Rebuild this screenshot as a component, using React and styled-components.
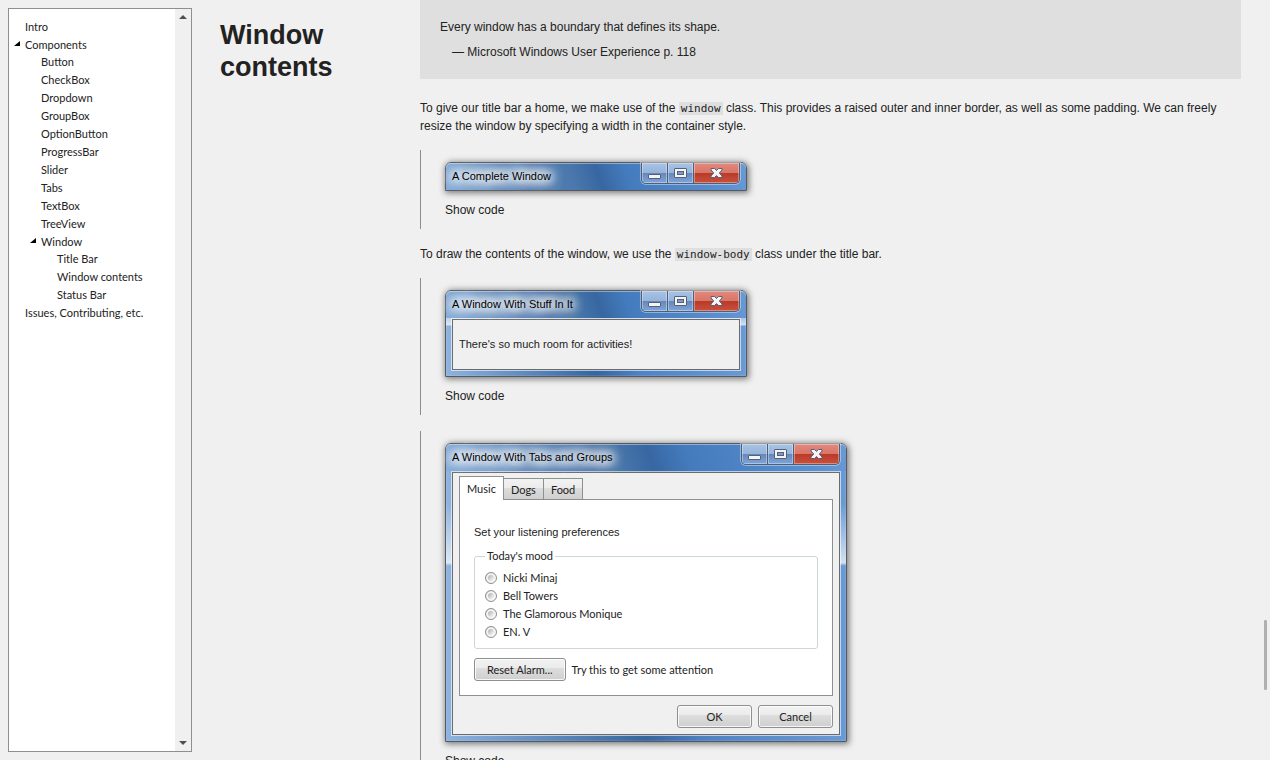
import React from 'react'
import styled, { createGlobalStyle, css } from 'styled-components'

const GlobalStyle = createGlobalStyle`
  * {
    box-sizing: border-box;
  }

  body {
    margin: 0;
    background: #f0f0f0;
    color: #222;
    font-family: 'Liberation Sans', Arial, sans-serif;
    font-size: 12px;
    line-height: 18px;
  }
`

const uiFont = css`
  font-family: Lato, 'Segoe UI', sans-serif;
  font-size: 11px;
`

const tree = [
  { label: 'Intro' },
  {
    label: 'Components',
    children: [
      { label: 'Button' },
      { label: 'CheckBox' },
      { label: 'Dropdown' },
      { label: 'GroupBox' },
      { label: 'OptionButton' },
      { label: 'ProgressBar' },
      { label: 'Slider' },
      { label: 'Tabs' },
      { label: 'TextBox' },
      { label: 'TreeView' },
      {
        label: 'Window',
        children: [
          { label: 'Title Bar' },
          { label: 'Window contents' },
          { label: 'Status Bar' },
        ],
      },
    ],
  },
  { label: 'Issues, Contributing, etc.' },
]

const moods = ['Nicki Minaj', 'Bell Towers', 'The Glamorous Monique', 'EN. V']

const TreeList = ({ items, nested }) => (
  <List $nested={nested}>
    {items.map((item) => (
      <li key={item.label}>
        <TreeLink href="#">
          {item.children && (
            <Marker viewBox="0 0 7 6" aria-hidden="true">
              <path d="M6 0v5H0z" />
            </Marker>
          )}
          {item.label}
        </TreeLink>
        {item.children && <TreeList items={item.children} nested />}
      </li>
    ))}
  </List>
)

const Win = ({ title, wide, children }) => (
  <Window $wide={wide}>
    <TitleBar>
      <TitleText>{title}</TitleText>
      <Controls>
        <ControlButton aria-label="Minimize" $low>
          <svg width="13" height="5" viewBox="0 0 13 5">
            <rect x="0.5" y="0.5" width="12" height="4" rx="0.5" fill="#f4f4f4" stroke="#55607c" />
          </svg>
        </ControlButton>
        <ControlButton aria-label="Maximize">
          <svg width="13" height="10" viewBox="0 0 13 10">
            <rect x="0.5" y="0.5" width="12" height="9" rx="0.5" fill="#f4f4f4" stroke="#55607c" />
            <rect x="3.5" y="3.5" width="6" height="3" fill="#7f9cc9" stroke="#55607c" />
          </svg>
        </ControlButton>
        <ControlButton aria-label="Close" $close>
          <svg width="13" height="10" viewBox="0 0 13 10">
            <path
              d="M1 .5h3.500l2 2 2-2H12v1.500L9.300 5 12 8v1.500H8.500l-2-2-2 2H1V8l2.700-3L1 2z"
              fill="#f4f4f4"
              stroke="#55607c"
              strokeLinejoin="round"
            />
          </svg>
        </ControlButton>
      </Controls>
    </TitleBar>
    {children}
  </Window>
)

const App = () => {
  return (
    <Page>
      <GlobalStyle />
      <Sidebar>
        <TreeList items={tree} />
        <TreeScroll aria-hidden="true">
          <svg width="8" height="6" viewBox="0 0 8 6">
            <path d="M4 1l4 4H0z" fill="#505050" />
          </svg>
          <svg width="8" height="6" viewBox="0 0 8 6">
            <path d="M4 5l4-4H0z" fill="#505050" />
          </svg>
        </TreeScroll>
      </Sidebar>
      <Main>
        <Heading>Window contents</Heading>
        <Content>
          <Quote>
            Every window has a boundary that defines its shape.
            <footer>— Microsoft Windows User Experience p. 118</footer>
          </Quote>
          <Text>
            To give our title bar a home, we make use of the <Code>window</Code> class. This
            provides a raised outer and inner border, as well as some padding. We can freely resize
            the window by specifying a width in the container style.
          </Text>
          <Example>
            <Win title="A Complete Window" />
            <details>
              <Summary>Show code</Summary>
            </details>
          </Example>
          <Text>
            To draw the contents of the window, we use the <Code>window-body</Code> class under the
            title bar.
          </Text>
          <Example>
            <Win title="A Window With Stuff In It">
              <WindowBody>
                <Note>There's so much room for activities!</Note>
              </WindowBody>
            </Win>
            <details>
              <Summary>Show code</Summary>
            </details>
          </Example>
          <Example>
            <Win title="A Window With Tabs and Groups" wide>
              <WindowBody>
                <TabRow role="tablist">
                  <Tab role="tab" aria-selected="true">Music</Tab>
                  <Tab role="tab" aria-selected="false">Dogs</Tab>
                  <Tab role="tab" aria-selected="false">Food</Tab>
                </TabRow>
                <TabPanel role="tabpanel">
                  <PanelText>Set your listening preferences</PanelText>
                  <Fieldset>
                    <legend>Today's mood</legend>
                    {moods.map((mood, i) => (
                      <Option key={mood}>
                        <input type="radio" name="mood" id={`mood-${i}`} />
                        <label htmlFor={`mood-${i}`}>{mood}</label>
                      </Option>
                    ))}
                  </Fieldset>
                  <AlarmRow>
                    <Button id="alarm">Reset Alarm...</Button>
                    <label htmlFor="alarm">Try this to get some attention</label>
                  </AlarmRow>
                </TabPanel>
                <Actions>
                  <Button>OK</Button>
                  <Button>Cancel</Button>
                </Actions>
              </WindowBody>
            </Win>
            <details>
              <Summary>Show code</Summary>
            </details>
          </Example>
        </Content>
      </Main>
      <ScrollThumb aria-hidden="true" />
    </Page>
  )
}

const Page = styled.div`
  display: flex;
  height: 100vh;
  overflow: hidden;
`

const Sidebar = styled.nav`
  display: flex;
  flex: 0 0 184px;
  margin: 8px 28px 8px 8px;
  border: 1px solid #8e8f8f;
  background: #fff;
`

const List = styled.ul`
  flex: 1;
  margin: ${({ $nested }) => ($nested ? '-1px 0 0' : '0')};
  padding: ${({ $nested }) => ($nested ? '0 0 0 16px' : '9px 0 0 16px')};
  list-style: none;
`

const TreeLink = styled.a`
  ${uiFont}
  position: relative;
  display: block;
  color: #222;
  line-height: 18px;
  text-decoration: none;
  white-space: nowrap;
`

const Marker = styled.svg`
  position: absolute;
  top: 5px;
  left: -11px;
  width: 7px;
  height: 6px;
`

const TreeScroll = styled.div`
  display: flex;
  flex-direction: column;
  align-items: center;
  justify-content: space-between;
  width: 16px;
  padding: 5px 0;
  background: #f0f0f0;
`

const Main = styled.main`
  display: flex;
  flex: 1;
  min-width: 0;
  align-items: flex-start;
  padding-right: 29px;
`

const Heading = styled.h2`
  flex: 0 0 200px;
  margin: 0;
  padding: 19px 60px 0 0;
  font-size: 27px;
  line-height: 32px;
`

const Content = styled.div`
  flex: 1;
  min-width: 0;
`

const Quote = styled.blockquote`
  margin: 0 0 20px;
  padding: 18px 20px;
  background: #dfdfdf;

  footer {
    margin-top: 7px;
    padding-left: 12px;
  }
`

const Text = styled.p`
  margin: 0 0 15px;
`

const Code = styled.code`
  padding: 0 2px;
  background: #dfdfdf;
  font-family: 'DejaVu Sans Mono', monospace;
  font-size: 11px;
  line-height: 14px;
`

const Example = styled.div`
  margin-bottom: 16px;
  padding: 12px 0 10px 24px;
  border-left: 1px solid #8c8c8c;
`

const Summary = styled.summary`
  margin-top: 10px;
  list-style: none;
`

const Window = styled.div`
  max-width: ${({ $wide }) => ($wide ? '402px' : '302px')};
  border: 1px solid #555a62;
  border-radius: 6px 6px 0 0;
  background:
    linear-gradient(transparent 20%, rgba(255, 255, 255, 0.7) 40%, transparent 41%),
    linear-gradient(90deg, #8db3df, #36659f 50%, #4f83c4 65%, #6a9ad4);
  box-shadow:
    1px 1px 6px 1px rgba(0, 0, 0, 0.5),
    inset 0 0 0 1px rgba(255, 255, 255, 0.1);
`

const TitleBar = styled.div`
  display: flex;
  align-items: flex-start;
  justify-content: space-between;
  height: 27px;
  padding: 0 6px;
  border-radius: 5px 5px 0 0;
  background: linear-gradient(70deg, #86aedb, #5b88bc 25%, #4b78ac 42%, #3767a2 51%, #447bbd 60%, #5a8fd0 90%, #6a9ad4);
  box-shadow: inset 0 1px 0 rgba(255, 255, 255, 0.4);
`

const TitleText = styled.div`
  padding-top: 4px;
  color: #000;
  font-size: 11px;
  text-shadow:
    0 0 10px #fff,
    0 0 10px #fff,
    0 0 12px #fff,
    0 0 12px #fff,
    0 0 16px #fff,
    0 0 16px #fff,
    0 0 16px #fff,
    0 0 16px #fff;
`

const Controls = styled.div`
  display: flex;
  height: 21px;
  border: 1px solid #4f5f78;
  border-top: 0;
  border-radius: 0 0 5px 5px;
  overflow: hidden;
  box-shadow: 0 0 0 1px rgba(255, 255, 255, 0.4);
`

const ControlButton = styled.button`
  display: flex;
  align-items: ${({ $low }) => ($low ? 'flex-end' : 'center')};
  justify-content: center;
  width: ${({ $close }) => ($close ? '45px' : '26px')};
  padding: ${({ $low }) => ($low ? '0 0 4px' : '0')};
  border: 0;
  border-right: ${({ $close }) => ($close ? '0' : '1px solid #4f5f78')};
  background: ${({ $close }) =>
    $close
      ? 'linear-gradient(#e08a7d, #da7567 50%, #b83a2a 50%, #c9503c)'
      : 'linear-gradient(#a9c3e3, #94b4dc 50%, #6487ba 50%, #7fa5d8)'};
  box-shadow: inset 0 0 0 1px rgba(255, 255, 255, 0.35);
`

const WindowBody = styled.div`
  margin: 1px 6px 6px;
  padding: 6px;
  border: 1px solid #6b6b6b;
  background: #f0f0f0;
  box-shadow: 0 0 0 1px rgba(255, 255, 255, 0.6);
`

const Note = styled.p`
  margin: 9px 0 10px;
  font-size: 11px;
`

const TabRow = styled.div`
  display: flex;
  align-items: flex-end;
  height: 20px;
`

const Tab = styled.button`
  ${uiFont}
  position: relative;
  height: 21px;
  margin-left: -1px;
  padding: 0 7px;
  border: 1px solid #8e8f8f;
  border-bottom: 0;
  background: linear-gradient(#f2f2f2, #ebebeb 45%, #ddd 45%, #cfcfcf);
  color: #222;

  &[aria-selected='true'] {
    z-index: 1;
    height: 24px;
    margin: 0 0 -1px;
    background: #fff;
  }
`

const TabPanel = styled.div`
  padding: 14px;
  border: 1px solid #8e8f8f;
  background: #fff;
`

const PanelText = styled.p`
  margin: 9px 0 6px;
  font-size: 11px;
`

const Fieldset = styled.fieldset`
  ${uiFont}
  margin: 0 0 9px;
  padding: 4px 10px 7px;
  border: 1px solid #cdd7db;
  border-radius: 3px;

  legend {
    padding: 0 2px;
  }
`

const Option = styled.div`
  display: flex;
  align-items: center;
  gap: 6px;

  input {
    appearance: none;
    width: 12px;
    height: 12px;
    margin: 0;
    border: 1px solid #8e8f8f;
    border-radius: 50%;
    background: linear-gradient(135deg, #909090, #fff 80%);
    box-shadow: inset 0 0 0 2px #f4f4f4;
  }
`

const AlarmRow = styled.div`
  ${uiFont}
  display: flex;
  align-items: center;
  gap: 6px;
`

const Button = styled.button`
  ${uiFont}
  min-width: 75px;
  height: 23px;
  padding: 0 12px;
  border: 1px solid #8e8f8f;
  border-radius: 3px;
  background: linear-gradient(#f2f2f2, #ebebeb 45%, #ddd 45%, #cfcfcf);
  box-shadow: inset 0 0 0 1px #fffc;
  color: #222;
`

const Actions = styled.div`
  display: flex;
  justify-content: flex-end;
  gap: 6px;
  padding-top: 9px;
`

const ScrollThumb = styled.div`
  position: fixed;
  top: 620px;
  right: 3px;
  width: 3px;
  height: 70px;
  border-radius: 1px;
  background: #b0b0b0;
`

export default App
